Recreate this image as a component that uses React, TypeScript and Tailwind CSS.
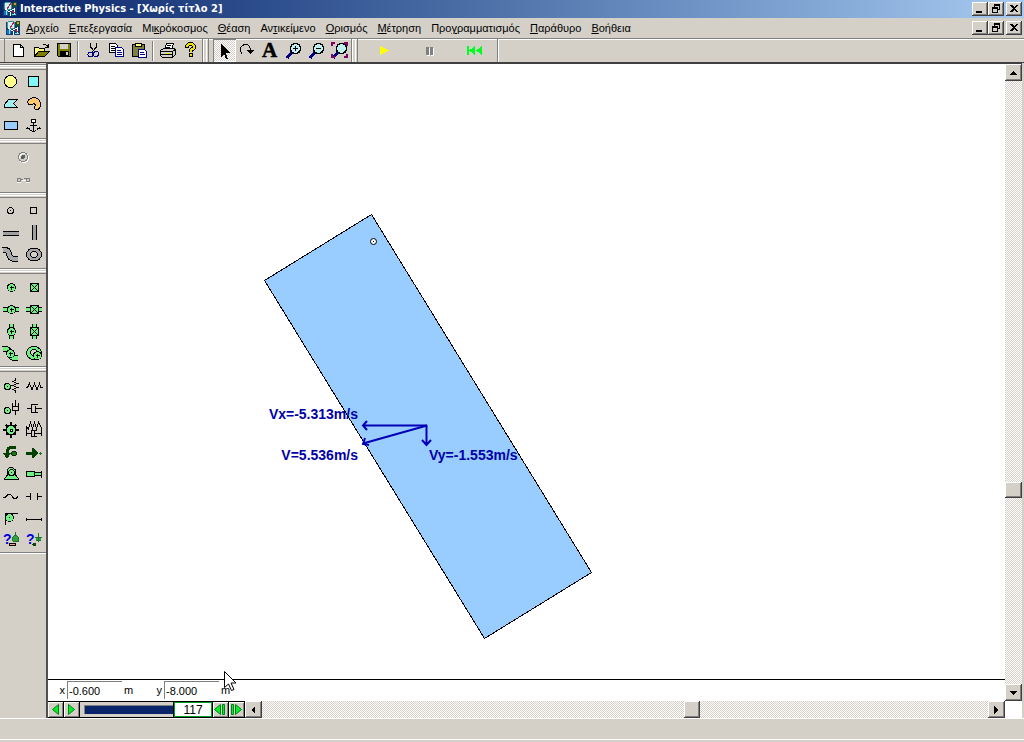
import type { ReactNode } from 'react'

const bevel =
  'bg-[#d4d0c8] shadow-[inset_-1px_-1px_#404040,inset_1px_1px_#ffffff,inset_-2px_-2px_#808080]'
const dither = 'bg-[repeating-conic-gradient(#ffffff_0_25%,#d4d0c8_0_50%)] bg-[length:2px_2px]'

type Tool = { label: string; icon: ReactNode }

const menus = [
  ['', 'Α', 'ρχείο'],
  ['', 'Ε', 'πεξεργασία'],
  ['Μι', 'κ', 'ρόκοσμος'],
  ['', 'Θ', 'έαση'],
  ['Αν', 'τ', 'ικείμενο'],
  ['', 'Ο', 'ρισμός'],
  ['', 'Μ', 'έτρηση'],
  ['Προ', 'γ', 'ραμματισμός'],
  ['', 'Π', 'αράθυρο'],
  ['', 'Β', 'οήθεια'],
]

const Magnifier = ({ children }: { children?: ReactNode }) => (
  <>
    <path d="M4 19L9 13" stroke="#000080" strokeWidth="3" />
    <circle cx="12.5" cy="9.5" r="5" fill="#c0f0f0" stroke="#000" strokeWidth="1.5" />
    {children}
  </>
)

const fileTools: Tool[] = [
  { label: 'New', icon: <path d="M6.5 5.5H13.5L16.5 8.5V17.5H6.5ZM13.5 5.5V8.5H16.5" fill="#fff" stroke="#000" /> },
  {
    label: 'Open',
    icon: (
      <>
        <path d="M4.5 17.5V8.5H8.5L9.5 9.5H14.5V12.5" fill="#ffff80" stroke="#000" />
        <path d="M4.5 17.5L8.5 12.5H19.5L14.5 17.5Z" fill="#808000" stroke="#000" />
        <path d="M12.5 6.5Q15 4 18 7.5M18.5 5V8.5H15" fill="none" stroke="#000" />
      </>
    ),
  },
  {
    label: 'Save',
    icon: (
      <>
        <path d="M4.5 4.5H17.5V17.5H5.5L4.5 16.5Z" fill="#808000" stroke="#000" />
        <path d="M7 5H15V10H7Z" fill="#d4d0c8" />
        <path d="M7 12H16V17H7Z" fill="#000" />
        <path d="M13 13H15V16H13Z" fill="#d4d0c8" />
      </>
    ),
  },
]

const editTools: Tool[] = [
  {
    label: 'Cut',
    icon: (
      <>
        <path d="M8.5 4V8L13 13M14.5 4V8L10 13" fill="none" stroke="#000" />
        <circle cx="8.5" cy="15.5" r="2.5" fill="none" stroke="#000080" />
        <circle cx="14" cy="15" r="2.5" fill="none" stroke="#000080" />
      </>
    ),
  },
  {
    label: 'Copy',
    icon: (
      <>
        <path d="M4.5 4.5H10.5L12.5 6.5V13.5H4.5Z" fill="#fff" stroke="#000" />
        <path d="M6 7.5H10M6 9.5H10M6 11.5H10" stroke="#000" />
        <path d="M10.5 8.5H16.5L18.5 10.5V17.5H10.5Z" fill="#fff" stroke="#000080" />
        <path d="M12 11.5H16M12 13.5H17M12 15.5H17" stroke="#000080" />
      </>
    ),
  },
  {
    label: 'Paste',
    icon: (
      <>
        <path d="M4.5 5.5H16.5V17.5H4.5Z" fill="#808040" stroke="#000" />
        <path d="M7.5 4.5H13.5V7.5H7.5Z" fill="#ffff80" stroke="#000" />
        <path d="M10.5 10.5H16.5L18.5 12.5V18.5H10.5Z" fill="#fff" stroke="#000080" />
        <path d="M12 13.5H16M12 15.5H17" stroke="#000080" />
      </>
    ),
  },
]

const helpTools: Tool[] = [
  {
    label: 'Print',
    icon: (
      <>
        <path d="M7.5 10.5L9.5 4.5H16.5L14.5 10.5Z" fill="#fff" stroke="#000" />
        <path d="M10 6.5H14M9 8.5H13" stroke="#000" />
        <path d="M3.5 11.5L6.5 9.5H17.5L18.5 10.5V15.5L15.5 18.5H5.5L3.5 16.5Z" fill="#d4d0c8" stroke="#000" />
        <path d="M4 12.5H15.5V18M4 15.5H15M15.5 12.5L18 10.5" fill="none" stroke="#000" />
        <path d="M9 14H13" stroke="#e0e000" />
      </>
    ),
  },
  {
    label: 'Help',
    icon: (
      <>
        <path d="M7 9V7L9 5H12L14 7V9L11 11V13" fill="none" stroke="#000" strokeWidth="4" />
        <path d="M7 8V7L9 5H12L14 7V9L11 11V13" fill="none" stroke="#f0e000" strokeWidth="2" />
        <path d="M9.5 14.5H12.5V17.5H9.5Z" fill="#f0e000" stroke="#000" />
      </>
    ),
  },
]

const viewTools: Tool[] = [
  { label: 'Select', icon: <path d="M7 5V18L10 15L12 20H14L12 14H16Z" fill="#000" /> },
  {
    label: 'Rotate',
    icon: (
      <>
        <path d="M5.5 15.5Q3.5 13.5 3.5 10.5Q4 5.5 9 5.5Q13.5 6 13.5 12" fill="none" stroke="#000" />
        <path d="M10 11H17L13.5 15Z" fill="#000" />
      </>
    ),
  },
  {
    label: 'Text',
    icon: (
      <text x="2" y="18" fontFamily="Liberation Serif, serif" fontWeight="700" fontSize="21" stroke="#000" strokeWidth="0.5">
        A
      </text>
    ),
  },
  { label: 'Zoom in', icon: <Magnifier><path d="M10 9.5H15M12.5 7V12" stroke="#000" strokeWidth="1.5" /></Magnifier> },
  { label: 'Zoom out', icon: <Magnifier><path d="M10 9.5H15" stroke="#000" strokeWidth="1.5" /></Magnifier> },
  {
    label: 'Zoom to fit',
    icon: (
      <>
        <Magnifier />
        <path d="M3 7V4H6M15 4H18V7M18 15V18H15M3 15V18H6" fill="none" stroke="#800060" strokeWidth="2" />
      </>
    ),
  },
]

const runTools: Tool[] = [
  { label: 'Run', icon: <path d="M6 7L15 11.5L6 16Z" fill="#ffff00" /> },
  {
    label: 'Pause',
    icon: (
      <>
        <path d="M8 9H11V17H8ZM12 9H15V17H12Z" fill="#fff" />
        <path d="M7 8H10V16H7ZM11 8H14V16H11Z" fill="#808080" />
      </>
    ),
  },
  { label: 'Reset', icon: <path d="M3 7H5V16H3ZM11 7V16L5 11.5ZM18 7V16L12 11.5Z" fill="#00ff20" /> },
]

const green = '#70f080'

const Pivot = ({ x = 11.5, y = 11.5 }) => (
  <>
    <circle cx={x} cy={y} r="4" fill={green} stroke="#000" />
    <path d={`M${x - 2} ${y}H${x + 2}M${x} ${y - 2}V${y + 2}`} stroke="#000" />
  </>
)

const Crossed = () => (
  <>
    <path d="M7.5 7.5H15.5V15.5H7.5Z" fill={green} stroke="#000" />
    <path d="M8 8L15 15M15 8L8 15" stroke="#000" />
  </>
)

const Ball = ({ y = 11 }) => (
  <>
    <circle cx="7.5" cy={y} r="3" fill={green} stroke="#000" />
    <path d={`M7 ${y - 0.5}H8V${y + 0.5}H7Z`} fill="#000" />
  </>
)

const Question = () => (
  <text x="3" y="16" fill="#0000e0" fontFamily="Liberation Sans, sans-serif" fontWeight="700" fontSize="14">?</text>
)

const groups: Tool[][] = [
  [
    { label: 'Circle', icon: <circle cx="10.5" cy="11.5" r="6" fill="#ffff90" stroke="#000" /> },
    { label: 'Square', icon: <path d="M5.5 6.5H15.5V16.5H5.5Z" fill="#80f8f8" stroke="#000" /> },
    { label: 'Polygon', icon: <path d="M4.5 15.5V12.5L8.5 7.5H17.5L13.5 11.5L17.5 15.5Z" fill="#a0f0f0" stroke="#000" /> },
    {
      label: 'Curved body',
      icon: <path d="M5.5 12.5Q3.5 8.5 7.5 6.5Q13 4 16.5 8.5Q19 13 15.5 17.5Q10.5 17.5 11.5 15Q13.5 12.5 10.5 11.5Q8 13.5 5.5 12.5Z" fill="#ffc870" stroke="#000" />,
    },
    { label: 'Rectangle', icon: <path d="M4.5 7.5H17.5V15.5H4.5Z" fill="#99ccff" stroke="#000" /> },
    {
      label: 'Anchor',
      icon: (
        <>
          <circle cx="10.5" cy="7" r="2" fill="#fff" stroke="#000" />
          <path d="M10.5 9V17.5M7 11.5H14M4.5 14V12.5M4.5 13.5L7.5 16.5L10.5 17.5L13.5 16.5L16.5 13.5M3 14.5H7M14 14.5H18" fill="none" stroke="#000" />
        </>
      ),
    },
  ],
  [
    {
      label: 'Join',
      icon: (
        <>
          <circle cx="12" cy="12" r="4.5" fill="none" stroke="#fff" />
          <circle cx="11" cy="11" r="4.5" fill="none" stroke="#808080" />
          <circle cx="11" cy="11" r="2" fill="#606060" />
        </>
      ),
    },
    {
      label: 'Split',
      icon: (
        <>
          <path d="M5 14.5H9M14 14.5H18M10 12.5H14" stroke="#fff" />
          <path d="M5.5 10.5H8.5V13.5H5.5ZM14.5 10.5H17.5V13.5H14.5Z" fill="none" stroke="#808080" />
          <path d="M9 11.5H11M12 10.5H14" stroke="#808080" />
        </>
      ),
    },
  ],
  [
    {
      label: 'Point element',
      icon: (
        <>
          <circle cx="10.5" cy="10.5" r="3" fill="none" stroke="#000" />
          <path d="M10 10H11V11H10Z" fill="#000" />
        </>
      ),
    },
    { label: 'Square point', icon: <path d="M7.5 7.5H13.5V13.5H7.5Z" fill="none" stroke="#000" /> },
    {
      label: 'Horizontal slot',
      icon: (
        <>
          <path d="M3 9H19V14H3Z" fill="#a0a0a0" />
          <path d="M3 9.5H19M3 13.5H19" stroke="#000" />
        </>
      ),
    },
    {
      label: 'Vertical slot',
      icon: (
        <>
          <path d="M9 3H14V18H9Z" fill="#a0a0a0" />
          <path d="M9.5 3V18M13.5 3V18" stroke="#000" />
        </>
      ),
    },
    {
      label: 'Curved slot',
      icon: (
        <>
          <path d="M3 6Q8 5 9 10Q10 16 18 15" fill="none" stroke="#000" strokeWidth="6" />
          <path d="M3 6Q8 5 9 10Q10 16 18 15" fill="none" stroke="#a8a8a8" strokeWidth="4" />
        </>
      ),
    },
    {
      label: 'Closed slot',
      icon: (
        <>
          <ellipse cx="11" cy="10.5" rx="7.5" ry="6.5" fill="#a8a8a8" stroke="#000" />
          <ellipse cx="11" cy="10.5" rx="3.5" ry="3" fill="#d4d0c8" stroke="#000" />
        </>
      ),
    },
  ],
  [
    { label: 'Pin joint', icon: <Pivot /> },
    { label: 'Rigid joint', icon: <Crossed /> },
    {
      label: 'Horizontal pin slot',
      icon: (
        <>
          <path d="M3 9.5H19M3 13.5H19" stroke="#000" />
          <path d="M3 10H19V13H3Z" fill={green} />
          <Pivot />
        </>
      ),
    },
    {
      label: 'Horizontal keyed slot',
      icon: (
        <>
          <path d="M3 9.5H19M3 13.5H19" stroke="#000" />
          <path d="M3 10H19V13H3Z" fill={green} />
          <Crossed />
        </>
      ),
    },
    {
      label: 'Vertical pin slot',
      icon: (
        <>
          <path d="M9.5 4V19M13.5 4V19" stroke="#000" />
          <path d="M10 4H13V19H10Z" fill={green} />
          <Pivot />
        </>
      ),
    },
    {
      label: 'Vertical keyed slot',
      icon: (
        <>
          <path d="M9.5 4V19M13.5 4V19" stroke="#000" />
          <path d="M10 4H13V19H10Z" fill={green} />
          <Crossed />
        </>
      ),
    },
    {
      label: 'Curved slot joint',
      icon: (
        <>
          <path d="M3 7Q8 6 9 10Q10 17 18 16" fill="none" stroke="#000" strokeWidth="6" />
          <path d="M3 7Q8 6 9 10Q10 17 18 16" fill="none" stroke={green} strokeWidth="4" />
          <Pivot x={10.5} y={11.5} />
        </>
      ),
    },
    {
      label: 'Closed slot joint',
      icon: (
        <>
          <ellipse cx="11" cy="11" rx="7.5" ry="6.5" fill={green} stroke="#000" />
          <ellipse cx="11" cy="10.5" rx="3.5" ry="3" fill="#d4d0c8" stroke="#000" />
          <Pivot x={14.5} y={13.5} />
        </>
      ),
    },
  ],
  [
    {
      label: 'Rotational spring',
      icon: (
        <>
          <Ball y={12.5} />
          <path d="M15.5 4V6L13 7.5L17.5 9.5L12.5 11.5L17.5 13.5L13 15.5L15.5 17V19" fill="none" stroke="#000" />
        </>
      ),
    },
    { label: 'Spring', icon: <path d="M3 13.5H4.5L6.5 9.5L9 15.5L11.5 9.5L14 15.5L16.5 9.5L18 13.5H19.5" fill="none" stroke="#000" /> },
    {
      label: 'Rotational damper',
      icon: (
        <>
          <Ball y={14.5} />
          <path d="M15.5 4V11M12 10.5H18M12.5 7V14.5H18.5V7M15.5 15V19" fill="none" stroke="#000" />
        </>
      ),
    },
    { label: 'Damper', icon: <path d="M4 12.5H8.5M15 8.5H8.5V16.5H15M12.5 10V15.5M13 12.5H19" fill="none" stroke="#000" /> },
    {
      label: 'Gear',
      icon: (
        <>
          <path d="M11 4V20M3 12H19M6 7L16 17M16 7L6 17" stroke="#000" strokeWidth="2" />
          <circle cx="11" cy="12" r="4.5" fill={green} stroke="#000" strokeWidth="1.5" />
          <path d="M10 11H12V13H10Z" fill="#fff" stroke="#000" />
        </>
      ),
    },
    {
      label: 'Spring damper',
      icon: (
        <>
          <path d="M3.5 18V9L5.5 11L7.5 4.5L9.5 11L11.5 4.5L13.5 11L15.5 4.5L18.5 10V18" fill="none" stroke="#000" />
          <path d="M3.5 15.5H8.5M14 12.5H8.5V18.5H14M11.5 13V18M12 15.5H18" fill="none" stroke="#000" />
        </>
      ),
    },
    {
      label: 'Torque',
      icon: (
        <>
          <path d="M16 7H12Q7 7 7 14" fill="none" stroke="#004000" strokeWidth="3" />
          <path d="M3 13H11L7 19Z" fill="#004000" />
          <circle cx="14" cy="13.5" r="2.5" fill="#207020" stroke="#003000" />
        </>
      ),
    },
    {
      label: 'Force',
      icon: (
        <>
          <path d="M3 12H9V8H10L15 13L10 18H9V15H3Z" fill="#004000" />
          <path d="M16 13.5H19M17.5 12V15" stroke="#207020" />
        </>
      ),
    },
    {
      label: 'Motor',
      icon: (
        <>
          <path d="M4.5 17.5V16.5L7.5 13V7.5L9.5 5.5H12.5L15.5 8V13L18.5 16.5V17.5Z" fill={green} stroke="#000" />
          <circle cx="11.5" cy="10.5" r="3" fill={green} stroke="#000" />
          <path d="M11 10H12V11H11Z" fill="#000" />
        </>
      ),
    },
    {
      label: 'Actuator',
      icon: (
        <>
          <path d="M3.5 9.5H11.5V14.5H3.5Z" fill={green} stroke="#000" />
          <path d="M12 10.5H18M12 13.5H18M18.5 9V16" stroke="#000" />
          <path d="M12 11H18V13H12Z" fill={green} />
        </>
      ),
    },
    { label: 'Rope', icon: <path d="M3 13.5H5L8 10.5H10.5L14 14.5H16L18 12.5" fill="none" stroke="#000" /> },
    { label: 'Separator', icon: <path d="M3 12.5H7M7.5 9V16M14.5 9V16M15 12.5H19" stroke="#000" /> },
    {
      label: 'Pulley',
      icon: (
        <>
          <path d="M5.5 19V7.5H18" fill="none" stroke="#000" />
          <circle cx="9.5" cy="11.5" r="4" fill={green} stroke="#000" />
          <path d="M9 11H10V12H9Z" fill="#000" />
        </>
      ),
    },
    { label: 'Rod', icon: <path d="M3.5 12V15M3 13.5H19M18.5 12V15" stroke="#000" /> },
    {
      label: 'Join question',
      icon: (
        <>
          <Question />
          <path d="M15.5 4V8M12.5 12V9.5L14.5 7.5H16.5L18.5 9.5V13.5H13.5Z" fill="#30a040" stroke="#207030" />
          <ellipse cx="12.5" cy="16.5" rx="3" ry="1.5" fill="#ffa080" stroke="#000" />
        </>
      ),
    },
    {
      label: 'Force question',
      icon: (
        <>
          <Question />
          <path d="M15.5 5V14M12 9.5H19M13 12.5H18" stroke="#207030" />
          <path d="M13 10H15V12H13ZM16 10H18V12H16Z" fill="#30a040" />
          <circle cx="11.5" cy="16.5" r="2" fill="#104010" />
        </>
      ),
    },
  ],
]

const Glyph = ({ children }: { children: ReactNode }) => (
  <svg width="22" height="22" viewBox="0 0 22 22" shapeRendering="crispEdges" className="shrink-0" aria-hidden="true">
    {children}
  </svg>
)

const AppIcon = () => (
  <svg width="16" height="16" viewBox="0 0 16 16" shapeRendering="crispEdges" className="shrink-0" aria-hidden="true">
    <path d="M1 2H15V15H1Z" fill="#104070" />
    <circle cx="6" cy="5" r="4" fill="#d0f0f0" stroke="#4090a0" />
    <path d="M11 1H15V6H11Z" fill="#205020" />
    <path d="M12 2H14V4H12Z" fill="#d0a030" />
    <path d="M3 8L8 11V15M8 10L12 8V13" fill="none" stroke="#fff" strokeWidth="1" />
    <path d="M9 2L5 8M10 10L13 12" stroke="#c02040" />
    <path d="M2 10H6V14H2Z" fill="#2070c0" />
    <path d="M4 9V14M10 13H14" stroke="#80e0f0" />
  </svg>
)

const windowGlyphs = [
  { label: 'Minimize', path: 'M4 9H10V11H4Z', space: '' },
  { label: 'Restore', path: 'M6 2H12V8H10V7H11V4H7V5H6ZM4 5H10V11H4ZM5 7V10H9V7Z', space: '' },
  { label: 'Close', path: 'M4 3H6L8 5L10 3H12L9 6.5L12 10H10L8 8L6 10H4L7 6.5Z', space: 'ml-[2px]' },
]

const WindowButtons = () => (
  <div className="ml-auto flex pr-[2px]">
    {windowGlyphs.map((g) => (
      <button key={g.label} aria-label={g.label} className={`h-[14px] w-4 ${bevel} ${g.space}`}>
        <svg width="16" height="14" viewBox="0 0 16 14" shapeRendering="crispEdges">
          <path d={g.path} fillRule="evenodd" />
        </svg>
      </button>
    ))}
  </div>
)

const ToolRow = ({ tools, wide = false, pressed }: { tools: Tool[]; wide?: boolean; pressed?: string }) => (
  <div className="flex">
    {tools.map((tool) => (
      <button
        key={tool.label}
        aria-label={tool.label}
        className={`flex h-[23px] items-start justify-center ${wide ? 'w-[45px]' : 'w-[23px]'} ${
          pressed === tool.label ? `${dither} shadow-[inset_1px_1px_#808080,inset_-1px_-1px_#ffffff]` : ''
        }`}
      >
        <Glyph>{tool.icon}</Glyph>
      </button>
    ))}
  </div>
)

const Divider = () => (
  <div className="flex w-[6px] justify-center">
    <div className="h-5 w-[2px] border-r border-l border-r-white border-l-[#808080]" />
  </div>
)

const Grip = () => (
  <div className="flex h-[23px] w-[11px] gap-[2px]">
    <div className="w-[2px] border-r border-l border-r-white border-l-[#808080]" />
    <div className="w-[3px] border-r border-l border-r-[#808080] border-l-white" />
  </div>
)

const arrows = {
  up: 'M8 6L12 10H4Z',
  down: 'M4 6H12L8 10Z',
  left: 'M6 8L10 4V12Z',
  right: 'M10 8L6 4V12Z',
}

const ScrollButton = ({ dir }: { dir: keyof typeof arrows }) => (
  <button aria-label={`Scroll ${dir}`} className={`h-[17px] w-[17px] shrink-0 ${bevel}`}>
    <svg width="16" height="16" viewBox="0 0 16 16" shapeRendering="crispEdges">
      <path d={arrows[dir]} />
    </svg>
  </button>
)

const StepButton = ({ label, path }: { label: string; path: string }) => (
  <button
    aria-label={label}
    className="h-[17px] w-4 shrink-0 border-t border-r border-b border-black bg-[#d4d0c8] shadow-[inset_1px_1px_#ffffff,inset_-1px_-1px_#808080]"
  >
    <svg width="15" height="15" viewBox="0 0 15 15">
      <path d={path} fill="#00f020" stroke="#008018" />
    </svg>
  </button>
)

const Coordinate = ({ name, value }: { name: string; value: string }) => (
  <div className="flex h-5 w-[97px] items-center">
    <label htmlFor={`coord-${name}`} className="w-[19px] pr-[2px] text-right">{name}</label>
    <input
      id={`coord-${name}`}
      defaultValue={value}
      className="h-[18px] w-[55px] border-t border-l border-[#808080] bg-white pl-px outline-none"
    />
    <span className="pl-[2px]">m</span>
  </div>
)

const Scene = () => (
  <svg className="block min-h-0 w-full flex-1" aria-label="Simulation">
    <g transform="translate(-48 -64)">
      <path d="M264.5 280.5L371.5 214.5L591.5 572.5L484.5 638.5Z" fill="#99ccff" stroke="#000" shapeRendering="crispEdges" />
      <circle cx="373.5" cy="241.5" r="3" fill="#fff" stroke="#000" />
      <path d="M373 241H374V242H373Z" />
      <g fill="none" stroke="#0000b8" strokeWidth="2">
        <path d="M427 425.5H363M367 421L363 425.5L367 430" />
        <path d="M427 425.5L363 443.5M365 438L363 444L369 445" />
        <path d="M426.5 425V444M422 440L426.5 445L431 440" />
      </g>
      <g fill="#0000a8" className="font-['Liberation_Sans',sans-serif] text-[14px] font-bold">
        <text x="358" y="419" textAnchor="end">Vx=-5.313m/s</text>
        <text x="358" y="460" textAnchor="end">V=5.536m/s</text>
        <text x="429" y="460">Vy=-1.553m/s</text>
      </g>
    </g>
  </svg>
)

const App = () => {
  return (
    <div className="relative flex h-screen flex-col overflow-hidden bg-[#d4d0c8] font-['Liberation_Sans',sans-serif] text-[11px] leading-4 text-black">
      <header className="flex h-[18px] shrink-0 items-center gap-[2px] bg-gradient-to-r from-[#0a246a] to-[#a6caf0] pl-[2px]">
        <AppIcon />
        <h1 className="font-['DejaVu_Sans_Condensed','Noto_Sans',sans-serif] text-[11px] leading-[18px] font-bold text-white">
          Interactive Physics - [Χωρίς τίτλο 2]
        </h1>
        <WindowButtons />
      </header>

      <nav className="flex h-5 shrink-0 items-center pl-[5px]">
        <AppIcon />
        <div className="flex gap-[10px] pl-[5px]">
          {menus.map(([before, key, after]) => (
            <button key={before + key + after}>
              {before}
              <span className="underline">{key}</span>
              {after}
            </button>
          ))}
        </div>
        <WindowButtons />
      </nav>

      <div className="flex h-[25px] shrink-0 items-center border-t border-b border-t-[#808080] border-b-[#404040] pl-1 shadow-[inset_0_1px_#ffffff]">
        <div className="h-[23px] w-[2px] border-l border-[#808080]" />
        <ToolRow tools={fileTools} />
        <Divider />
        <ToolRow tools={editTools} />
        <Divider />
        <ToolRow tools={helpTools} />
        <Grip />
        <ToolRow tools={viewTools} pressed="Select" />
        <Grip />
        <ToolRow tools={runTools} wide />
        <div className="h-[23px] w-[2px] border-r border-l border-r-white border-l-[#808080]" />
      </div>

      <main className="flex min-h-0 flex-1">
        <aside className="w-12 shrink-0 border-r-2 border-[#505050]">
          {groups.map((group, i) => (
            <section key={i}>
              <div className={`flex flex-col justify-center gap-px ${i === 0 ? 'h-[7px]' : 'h-[10px]'}`}>
                <div className="h-[2px] border-t border-b border-t-[#808080] border-b-white" />
                <div className="h-[3px] border-t border-b border-t-white border-b-[#808080]" />
              </div>
              <div className={i === 1 ? 'flex flex-col items-center' : 'grid grid-cols-2'}>
                {group.map((tool) => (
                  <button key={tool.label} aria-label={tool.label} className="h-[22px]">
                    <Glyph>{tool.icon}</Glyph>
                  </button>
                ))}
              </div>
            </section>
          ))}
          <div className="mt-[2px] h-[2px] border-t border-b border-t-[#808080] border-b-white" />
        </aside>

        <div className="flex min-w-0 flex-1 flex-col border-t border-[#404040]">
          <div className="flex min-h-0 flex-1">
            <div className="flex min-w-0 flex-1 flex-col bg-white">
              <Scene />
              <div className="flex h-[22px] shrink-0 border-t border-black">
                <Coordinate name="x" value="-0.600" />
                <Coordinate name="y" value="-8.000" />
              </div>
            </div>
            <div className={`flex w-[17px] flex-col ${dither}`}>
              <ScrollButton dir="up" />
              <div className="flex-[402]" />
              <div className={`h-4 ${bevel}`} />
              <div className="flex-[186]" />
              <ScrollButton dir="down" />
            </div>
          </div>

          <div className="flex h-[17px] shrink-0">
            <StepButton label="Step back" path="M4.5 7.5L10.5 2.5V12.5Z" />
            <StepButton label="Step forward" path="M10.5 7.5L4.5 2.5V12.5Z" />
            <div className="flex w-[93px] items-center border-t border-b border-black pl-1">
              <input
                type="range"
                aria-label="Frame"
                defaultValue="100"
                className="h-[9px] w-full appearance-none border-t border-l border-[#808080] bg-[#0a246a] [&::-webkit-slider-thumb]:w-0 [&::-webkit-slider-thumb]:appearance-none"
              />
            </div>
            <input
              aria-label="Frame number"
              defaultValue="117"
              className="w-10 border-2 border-[#00a020] bg-white text-center text-[12px] outline-1 -outline-offset-1 outline-black"
            />
            <StepButton label="Previous frame" path="M1.5 7.5L7.5 2.5V12.5ZM9.5 2.5H11.5V12.5H9.5Z" />
            <StepButton label="Next frame" path="M2.5 2.5H4.5V12.5H2.5ZM12.5 7.5L6.5 2.5V12.5Z" />
            <div className={`flex min-w-0 flex-1 ${dither}`}>
              <ScrollButton dir="left" />
              <div className="flex-[422]" />
              <div className={`w-4 ${bevel}`} />
              <div className="flex-[288]" />
              <ScrollButton dir="right" />
            </div>
            <div className="w-[17px] bg-white" />
          </div>
        </div>
        <div className="w-[2px]" />
      </main>

      <footer className="h-6 shrink-0 border-t border-white pt-5">
        <div className="border-t border-white" />
      </footer>

      {/* mouse pointer */}
      <svg className="absolute top-[671px] left-[224px]" width="13" height="22" viewBox="0 0 13 22" aria-hidden="true">
        <path d="M0.5 0.5V16.5L4.5 13L7.5 19.5L10 18.5L7 12H12Z" fill="#fff" stroke="#000" />
      </svg>
    </div>
  )
}

export default App
